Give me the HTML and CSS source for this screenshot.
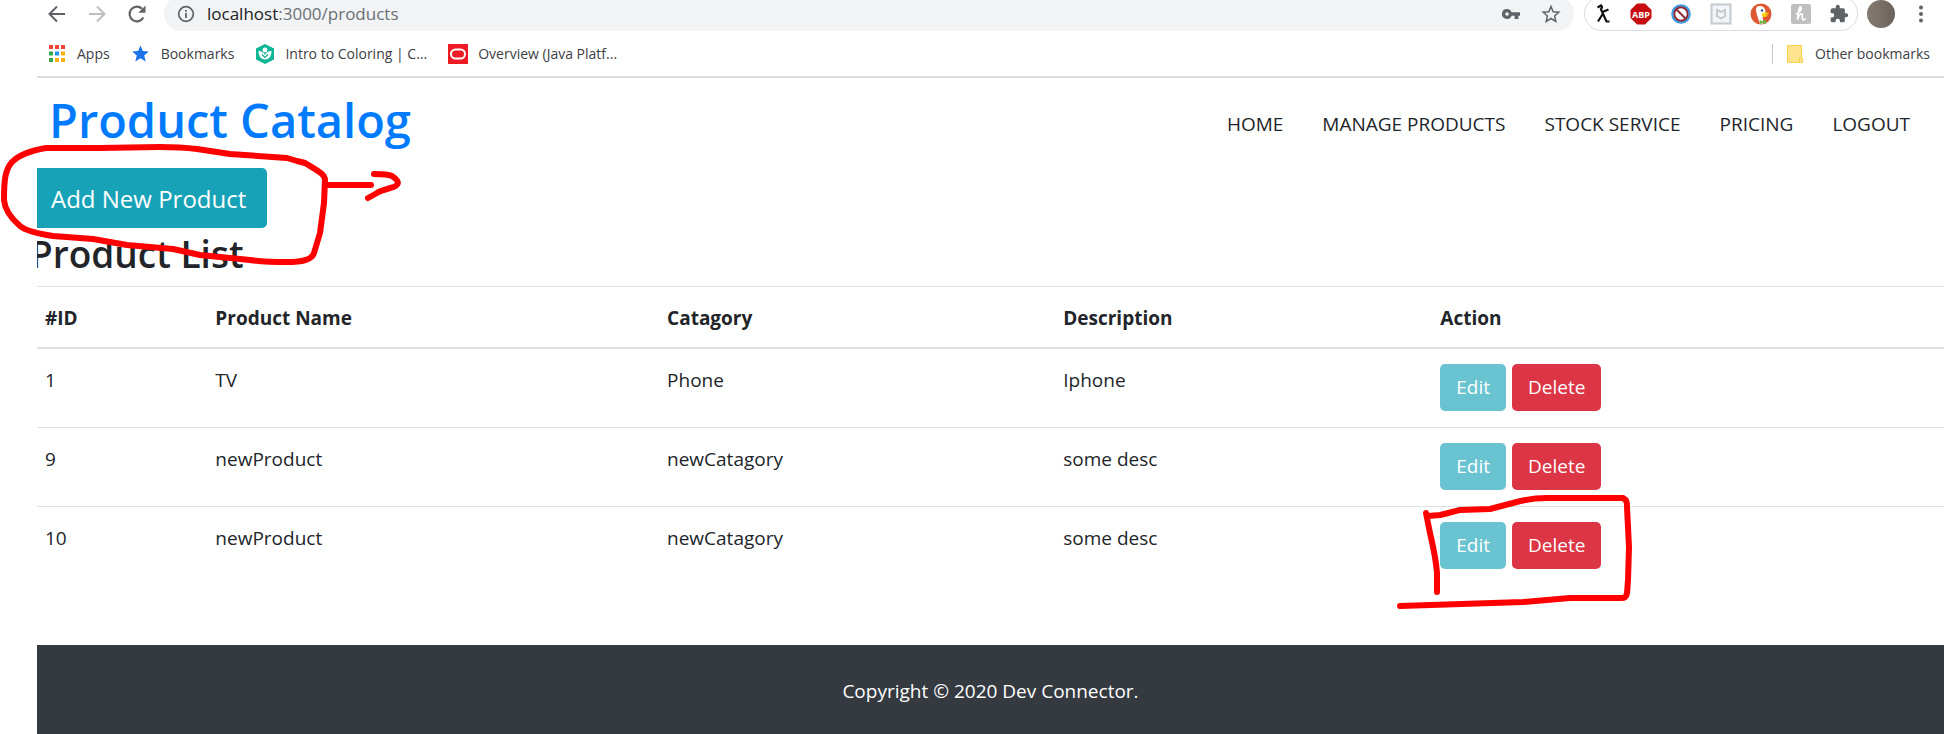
FILE: index.html
```html
<!DOCTYPE html>
<html lang="en">
<head>
<meta charset="utf-8">
<title>Product Catalog</title>
<link rel="stylesheet" href="styles.css">
</head>
<body>
<div class="window">
  <div class="toolbar">
    <button class="tool" aria-label="Back"><svg width="20" height="20" viewBox="0 0 20 20" fill="none" stroke="#5f6368" stroke-width="2"><path d="M18 10H3M10 2.500 2.500 10l7.500 7.500"/></svg></button>
    <button class="tool" aria-label="Forward"><svg width="20" height="20" viewBox="0 0 20 20" fill="none" stroke="#bcbec1" stroke-width="2"><path d="M2 10h15M10 2.500 17.500 10 10 17.500"/></svg></button>
    <button class="tool" aria-label="Reload"><svg width="20" height="20" viewBox="0 0 20 20"><path d="M16.300 13.500A7.300 7.300 0 1 1 15 4.800" fill="none" stroke="#5f6368" stroke-width="2.200"/><path d="M18.500 1.500v7.200h-7.200z" fill="#5f6368"/></svg></button>
    <div class="address">
      <svg width="18" height="18" viewBox="0 0 18 18"><circle cx="9" cy="9" r="7.300" fill="none" stroke="#5f6368" stroke-width="1.700"/><path d="M8.100 8h1.800v5H8.100zM8.100 5h1.800v1.800H8.100z" fill="#5f6368"/></svg>
      <span class="url"><span class="host">localhost</span>:3000/products</span>
      <button class="tool" aria-label="Passwords"><svg width="20" height="20" viewBox="0 0 20 20"><path fill="#5f6368" fill-rule="evenodd" d="M6 5a5 5 0 0 1 4.600 3.200H19v3.600h-1.600V15h-3.800v-3.200h-3A5 5 0 1 1 6 5zm0 3.200a1.800 1.800 0 1 0 0 3.600 1.800 1.800 0 0 0 0-3.600z"/></svg></button>
      <button class="tool" aria-label="Bookmark this page"><svg width="20" height="20" viewBox="0 0 20 20" fill="none" stroke="#5f6368" stroke-width="1.500"><path d="m10 2.500 2.200 5.200 5.600.500-4.200 3.700 1.200 5.500L10 14.500l-4.800 2.900 1.200-5.500-4.200-3.700 5.600-.500z"/></svg></button>
    </div>
    <div class="extensions">
      <button class="tool" aria-label="Lambda"><svg width="20" height="20" viewBox="0 0 20 20" fill="none" stroke="#111" stroke-width="2.200"><path d="M4.500 3.500 8 1.500l1 1.500-1 2.500 5.500 12h3M15.500 5.500 9.500 8M10 9.500l-5 8"/></svg></button>
      <button class="tool" aria-label="Adblock Plus"><svg width="22" height="22" viewBox="0 0 22 22"><path d="M7 .500h8L21.500 7v8L15 21.500H7L.500 15V7z" fill="#c70d12"/><text class="abp" x="11" y="14.500" text-anchor="middle">ABP</text></svg></button>
      <button class="tool" aria-label="Blocker"><svg width="20" height="20" viewBox="0 0 20 20" fill="none"><circle cx="10" cy="10" r="8.700" fill="#fff" stroke="#3a9be8" stroke-width="2.200"/><circle cx="10" cy="10" r="6.700" stroke="#8b2a35" stroke-width="2"/><path d="m5.500 5.500 9 9" stroke="#8b2a35" stroke-width="2"/></svg></button>
      <button class="tool" aria-label="Shield"><svg width="22" height="22" viewBox="0 0 22 22" fill="none"><rect x="1.500" y="1.500" width="19" height="19" fill="#f2f5f7" stroke="#c3cad0" stroke-width="2"/><path d="m7 7 4 2 4-2v6l-4 2.500L7 13z" stroke="#c3cad0" stroke-width="2"/></svg></button>
      <button class="tool" aria-label="Duck"><svg width="22" height="22" viewBox="0 0 22 22"><circle cx="11" cy="11" r="10.500" fill="#de5833"/><path d="M7 3.500c4-1.500 8 0 8.500 4.500l-.500 4-2.500 2 1 6.500-3.500.500C8.500 17 7 12 6 8c-.300-2 .500-3 1-4.500z" fill="#fff"/><circle cx="12" cy="7.500" r="1.200" fill="#2d4f8e"/><path d="M12 10.500c3-1.500 5-1 7-.500-1 1.500-3 1.500-4 2l3 .500c-1 1.500-4 2-6 .500z" fill="#fdd20a"/><path d="m9.500 17 3 1.200L16 17v4l-3-1-3 1z" fill="#65bc46"/></svg></button>
      <button class="tool" aria-label="Honey"><svg width="22" height="22" viewBox="0 0 22 22"><rect x="1" y="1" width="20" height="20" rx="2" fill="#c0c0c0"/><path d="M6 11c4-2 6-5 5-7-2-1-3 6-3.500 13 1-5 3-6.500 4.500-6 1.500 1-1 5 1 6 1 .300 2-1 2.500-2" fill="none" stroke="#fff" stroke-width="1.600"/></svg></button>
      <button class="tool" aria-label="Extensions"><svg width="20" height="20" viewBox="0 0 24 24"><path fill="#5f6368" d="M20.500 11H19V7a2 2 0 0 0-2-2h-4V3.500a2.500 2.500 0 0 0-5 0V5H4a2 2 0 0 0-2 2v3.800h1.500a2.700 2.700 0 0 1 0 5.400H2V20a2 2 0 0 0 2 2h3.800v-1.500a2.700 2.700 0 0 1 5.400 0V22H17a2 2 0 0 0 2-2v-4h1.500a2.500 2.500 0 0 0 0-5z"/></svg></button>
    </div>
    <button class="tool" aria-label="Profile"><span class="avatar"></span></button>
    <button class="tool" aria-label="Menu"><svg width="6" height="18" viewBox="0 0 6 18" fill="#5f6368"><circle cx="3" cy="2.500" r="2"/><circle cx="3" cy="9" r="2"/><circle cx="3" cy="15.500" r="2"/></svg></button>
  </div>

  <div class="bookmarks">
    <a class="bookmark" href="#"><svg width="20" height="20" viewBox="0 0 20 20"><path fill="#f44336" d="M2 1h4v4H2zM8 1h4v4H8zM14 1h4v4h-4z"/><path fill="#34a853" d="M2 7.500h4v4H2zM2 14h4v4H2z"/><path fill="#2196f3" d="M8 7.500h4v4H8z"/><path fill="#fbb00b" d="M14 7.500h4v4h-4zM8 14h4v4H8zM14 14h4v4h-4z"/></svg>Apps</a>
    <a class="bookmark" href="#"><svg width="20" height="20" viewBox="0 0 20 20"><path fill="#1a73e8" d="m9.500 1.500 2.300 5.600 6 .500-4.600 3.900 1.500 5.900-5.200-3.200-5.200 3.200 1.500-5.900L1.200 7.600l6-.500z"/></svg>Bookmarks</a>
    <a class="bookmark" href="#"><svg width="20" height="20" viewBox="0 0 20 20"><path fill="#0fb594" d="m10 0 9 4.500v11L10 20l-9-4.500v-11z"/><circle cx="10" cy="6" r="2.400" fill="#fff"/><path fill="#fff" d="M3.500 7c3.500 0 6 1.500 6.500 4.500C10.500 8.500 13 7 16.500 7c0 5-2.500 8.500-6.500 8.500S3.500 12 3.500 7z"/><path d="m7 10.500 3 3 3-3" fill="none" stroke="#0fb594" stroke-width="1.200"/></svg>Intro to Coloring | C...</a>
    <a class="bookmark" href="#"><svg width="20" height="20" viewBox="0 0 20 20"><path fill="#ed1c24" d="M0 0h20v20H0z"/><rect x="3" y="5.500" width="14" height="9" rx="4.500" fill="none" stroke="#fff" stroke-width="2"/></svg>Overview (Java Platf...</a>
    <a class="bookmark other" href="#"><svg width="20" height="20" viewBox="0 0 20 20"><path fill="#ffe48f" stroke="#f8d24a" d="M2.500 1.500h14V14h1v4.500h-15z"/><path fill="none" stroke="#f8d24a" d="M14.500 18v-4.500h2"/></svg>Other bookmarks</a>
  </div>

  <div class="page">
    <header class="header">
      <h1 class="brand"><a href="#">Product Catalog</a></h1>
      <nav class="nav">
        <a href="#">HOME</a>
        <a href="#">MANAGE PRODUCTS</a>
        <a href="#">STOCK SERVICE</a>
        <a href="#">PRICING</a>
        <a href="#">LOGOUT</a>
      </nav>
    </header>
    <main class="content">
      <button class="btn btn-add">Add New Product</button>
      <h2 class="heading">Product List</h2>
      <table class="table">
        <colgroup><col class="col-id"><col class="col-name"><col class="col-category"><col class="col-description"><col></colgroup>
        <thead>
          <tr><th>#ID</th><th>Product Name</th><th>Catagory</th><th>Description</th><th>Action</th></tr>
        </thead>
        <tbody>
          <tr><td>1</td><td>TV</td><td>Phone</td><td>Iphone</td><td><div class="actions"><button class="btn btn-edit">Edit</button><button class="btn btn-delete">Delete</button></div></td></tr>
          <tr><td>9</td><td>newProduct</td><td>newCatagory</td><td>some desc</td><td><div class="actions"><button class="btn btn-edit">Edit</button><button class="btn btn-delete">Delete</button></div></td></tr>
          <tr><td>10</td><td>newProduct</td><td>newCatagory</td><td>some desc</td><td><div class="actions"><button class="btn btn-edit">Edit</button><button class="btn btn-delete">Delete</button></div></td></tr>
        </tbody>
      </table>
    </main>
    <footer class="footer">Copyright © 2020 Dev Connector.</footer>
  </div>

  <svg class="ink" width="1944" height="734" viewBox="0 0 1944 734" aria-hidden="true">
    <path d="M46 148C28 151 18 156 12 162C5 170 4 180 4 200C5 212 13 220 20 226C26 231 40 234 53 236L93 239L127 245L173 249L200 255L250 260C265 262 278 262 287 262C302 262 312 260 314 253L317 243L320 233L324 203L325 180C325 174 318 171 305 163L297 161L287 158L230 154L197 149C180 147 165 147 160 147L100 148Z"/>
    <path d="M327 185H371M374 174C385 174 390 175 392 176C401 182 399 186 390 188C385 190 379 191 377 193L368 198"/>
    <path d="M1426 513L1430 533C1434 550 1436 560 1437 573V592M1428 516L1440 515C1450 513 1455 511 1460 510L1490 509L1513 503C1530 498 1540 498 1547 498H1623C1627 500 1627 503 1627 507L1629 547L1628 580C1627 592 1628 598 1622 598H1570L1523 602L1400 606"/>
  </svg>
</div>
</body>
</html>
```
FILE: styles.css
```css
* { box-sizing: border-box; }

body {
  margin: 0;
  background: #fff;
  color: #212529;
  font: 19px/30px "Open Sans", "Noto Sans", sans-serif;
}

a { color: inherit; text-decoration: none; }
button { font: inherit; border: 0; padding: 0; cursor: pointer; }

.window {
  position: relative;
  display: flex;
  flex-direction: column;
  min-height: 100vh;
  padding-left: 37px;
  overflow: hidden;
}

/* Browser toolbar */
.toolbar {
  display: flex;
  align-items: center;
  height: 35px;
  margin-top: -4px;
  padding-right: 3px;
}
.tool {
  display: flex;
  flex: none;
  align-items: center;
  justify-content: center;
  width: 40px;
  height: 35px;
  background: none;
}
.address {
  display: flex;
  flex: 1;
  align-items: center;
  height: 35px;
  margin: 0 10px 0 7px;
  padding: 0 3px 0 13px;
  border-radius: 18px;
  background: #f1f3f4;
}
.url {
  flex: 1;
  padding-left: 12px;
  font-size: 17px;
  color: #6b6f74;
}
.host { color: #202124; }
.extensions {
  display: flex;
  align-items: center;
  height: 35px;
  margin-right: 3px;
  border: 1px solid #dadce0;
  border-radius: 18px;
}
.extensions .tool:first-child,
.extensions .tool:last-child { width: 36px; }
.abp {
  font: bold 9px "Open Sans", sans-serif;
  fill: #fff;
}
.avatar {
  width: 28px;
  height: 28px;
  border-radius: 50%;
  background: linear-gradient(90deg, #857b70, #6b625c);
}

/* Bookmarks bar */
.bookmarks {
  display: flex;
  align-items: center;
  gap: 21px;
  height: 47px;
  padding: 0 14px 0 10px;
  border-bottom: 2px solid #dadce0;
  font-size: 14px;
  line-height: 20px;
  color: #3c4043;
}
.bookmark {
  display: flex;
  align-items: center;
  gap: 10px;
  white-space: nowrap;
}
.other {
  margin-left: auto;
  padding-left: 12px;
  border-left: 1px solid #c6c8cb;
}

/* Site */
.page {
  display: flex;
  flex: 1;
  flex-direction: column;
  overflow: hidden;
}
.header {
  display: flex;
  align-items: center;
  justify-content: space-between;
  height: 90px;
  padding: 0 34px 6px 12px;
}
.brand {
  margin: 0;
  font-size: 47px;
  line-height: 60px;
  font-weight: 600;
  color: #007bff;
}
.nav {
  display: flex;
  gap: 39px;
  padding-top: 8px;
}
.content {
  margin-left: -7px;
  padding-bottom: 60px;
}
.btn {
  display: block;
  border-radius: 5px;
  color: #fff;
}
.btn-add {
  padding: 12px 21px 10px;
  font-size: 24px;
  line-height: 38px;
  background: #17a2b8;
}
.heading {
  margin: 0 0 6px;
  font-size: 37px;
  line-height: 52px;
  font-weight: 600;
}
.table {
  width: 100%;
  border-collapse: separate;
  border-spacing: 0;
  table-layout: fixed;
}
.col-id { width: 8.9%; }
.col-name { width: 23.6%; }
.col-category { width: 20.7%; }
.col-description { width: 19.7%; }
.table th,
.table td {
  padding: 15px;
  border-top: 1px solid #dee2e6;
  text-align: left;
  vertical-align: top;
  line-height: 32px;
}
.table th {
  padding-bottom: 13px;
  border-bottom: 2px solid #dee2e6;
  font-weight: 700;
}
.table td { padding-bottom: 16px; }
.table tbody tr:first-child td { border-top: 0; }
.actions {
  display: flex;
  gap: 6px;
}
.actions .btn {
  padding: 9px 16px;
  line-height: 29px;
}
.btn-edit { background: #6ac3d1; }
.btn-delete { background: #dc3545; }

.footer {
  flex: 1;
  padding: 31px 0 27px;
  background: #343a40;
  color: #fff;
  text-align: center;
}

/* Red pen strokes over the page */
.ink {
  position: absolute;
  top: 0;
  left: 0;
  fill: none;
  stroke: #f00;
  stroke-width: 6;
  stroke-linecap: round;
  stroke-linejoin: round;
  pointer-events: none;
}
```
